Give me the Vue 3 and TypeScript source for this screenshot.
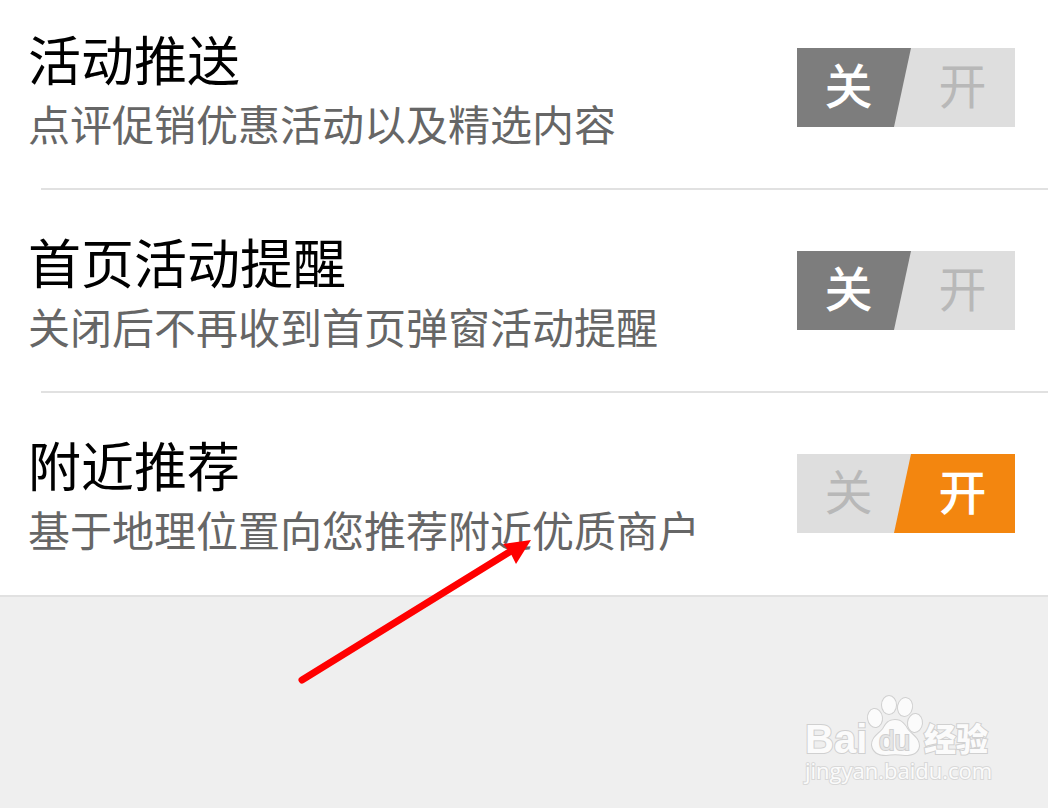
<script setup lang="ts">
import { ref } from 'vue'

interface Setting {
  id: string
  title: string
  hint: string
  on: boolean
}

const settings = ref<Setting[]>([
  { id: 'promo', title: '活动推送', hint: '点评促销优惠活动以及精选内容', on: false },
  { id: 'home', title: '首页活动提醒', hint: '关闭后不再收到首页弹窗活动提醒', on: false },
  { id: 'nearby', title: '附近推荐', hint: '基于地理位置向您推荐附近优质商户', on: true },
])
</script>

<template>
  <main class="page">
    <ul class="list">
      <li v-for="item in settings" :key="item.id" class="item">
        <div class="row">
          <div class="copy">
            <label class="title" :for="item.id">{{ item.title }}</label>
            <p class="hint" :id="item.id + '-hint'">{{ item.hint }}</p>
          </div>
          <label class="switch" :class="{ on: item.on }">
            <input
              :id="item.id"
              v-model="item.on"
              class="box"
              type="checkbox"
              role="switch"
              :aria-describedby="item.id + '-hint'"
            />
            <span class="side off-side">关</span>
            <span class="side on-side">开</span>
          </label>
        </div>
      </li>
    </ul>

    <svg class="arrow" width="240" height="150" viewBox="0 0 240 150" aria-hidden="true">
      <path d="M7 145L216 16" stroke="#f00" stroke-width="7" stroke-linecap="round" />
      <path d="M236 5L208 9L215 17L221 29Z" fill="#f00" />
    </svg>

    <svg class="mark" width="200" height="100" viewBox="0 0 200 100" role="img" aria-label="Baidu 经验 jingyan.baidu.com">
      <g class="ink">
        <text class="latin" x="5" y="63">Bai</text>
        <ellipse cx="75" cy="28" rx="7" ry="9" transform="rotate(-8 75 28)" />
        <ellipse cx="89" cy="15" rx="7" ry="9" />
        <ellipse cx="105" cy="17" rx="7" ry="9" transform="rotate(10 105 17)" />
        <ellipse cx="115" cy="33" rx="7" ry="9" transform="rotate(6 115 33)" />
        <path d="M95 30C102 30 105 35 108 40C112 45 119 48 119 56C118 63 112 65 105 65C98 64 92 64 86 65C79 65 73 62 72 55C72 47 79 44 83 39C86 34 88 30 95 30Z" />
        <text class="cjk" x="124" y="61">经验</text>
      </g>
      <text class="du" x="79" y="60">du</text>
      <text class="site" x="5" y="89">jingyan.baidu.com</text>
    </svg>
  </main>
</template>

<style>
body {
  margin: 0;
  background: #efefef;
}
</style>

<style scoped>
.page {
  position: relative;
  min-height: 100vh;
  background: #efefef;
  overflow: hidden;
  font-family: "Noto Sans CJK SC", sans-serif;
}
.list {
  margin: 0;
  padding: 0;
  list-style: none;
  background: #fff;
  border-bottom: 2px solid #e1e1e1;
}
.item {
  padding-left: 28px;
}
.row {
  display: flex;
  align-items: flex-start;
  justify-content: space-between;
  padding: 36px 33px 35px 0;
}
.item:first-child .row {
  padding-top: 23px;
}
.item:last-child .row {
  padding-bottom: 36px;
}
.item + .item::before {
  content: "";
  display: block;
  height: 2px;
  margin-left: 13px;
  background: #e1e1e1;
}
.title {
  display: block;
  font-size: 53px;
  line-height: 70px;
  color: #000;
}
.hint {
  margin: 0;
  font-size: 42px;
  line-height: 60px;
  color: #666;
}
.switch {
  position: relative;
  display: grid;
  grid-template-columns: 103px 115px;
  flex: none;
  height: 79px;
  margin-top: 25px;
  background: #dedede;
  font-size: 48px;
  font-weight: 400;
  line-height: 70px;
  text-align: center;
  cursor: pointer;
}
.switch::before {
  content: "";
  position: absolute;
  inset: 0;
  background: #7d7d7d;
  clip-path: polygon(0 0, 114px 0, 97px 100%, 0 100%);
}
.switch.on::before {
  background: #f3860f;
  clip-path: polygon(114px 0, 100% 0, 100% 100%, 97px 100%);
}
.box {
  position: absolute;
  inset: 0;
  width: 100%;
  height: 100%;
  margin: 0;
  opacity: 0;
  cursor: pointer;
}
.side {
  position: relative;
  color: #b8b8b8;
  pointer-events: none;
}
.on-side {
  padding-left: 10px;
}
.switch:not(.on) .off-side,
.switch.on .on-side {
  color: #fff;
  font-weight: 500;
}
.arrow {
  position: absolute;
  left: 295px;
  top: 535px;
  fill: none;
  pointer-events: none;
}
.mark {
  position: absolute;
  right: 48px;
  bottom: 18px;
}
.ink {
  fill: #fbfbfb;
  stroke: #d0d0d0;
  stroke-width: 2px;
  paint-order: stroke;
}
.latin {
  font: 700 40px "Liberation Sans", sans-serif;
}
.cjk {
  font: 900 32px "Noto Sans CJK SC", sans-serif;
}
.du {
  font: 400 28px "Liberation Sans", sans-serif;
  fill: #e6e6e6;
  stroke: #cfcfcf;
  stroke-width: 2px;
  paint-order: stroke;
}
.site {
  font: 400 22px "Open Sans", sans-serif;
  fill: #fbfbfb;
  stroke: #d8d8d8;
  stroke-width: 2px;
  paint-order: stroke;
}
</style>
